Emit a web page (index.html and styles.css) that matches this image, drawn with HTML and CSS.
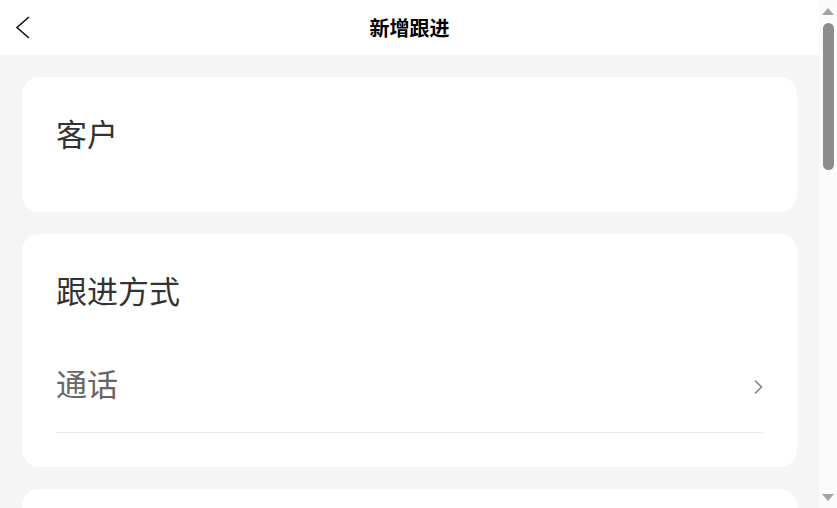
FILE: index.html
```html
<!DOCTYPE html>
<html lang="zh-CN">
<head>
<meta charset="utf-8">
<title>新增跟进</title>
<link rel="stylesheet" href="styles.css">
</head>
<body>
<div class="screen">
  <div class="app">
    <header class="nav">
      <button class="nav-back" type="button" aria-label="返回">
        <svg width="16" height="24" viewBox="0 0 16 24"><polyline points="14,1 2,11.5 14,22" fill="none" stroke="#111" stroke-width="1.6" stroke-linejoin="miter"/></svg>
      </button>
      <h1 class="nav-title">新增跟进</h1>
    </header>

    <main class="page">
      <section class="card card-loose">
        <div class="card-title">客户</div>
      </section>

      <section class="card">
        <div class="card-title">跟进方式</div>
        <div class="field">
          <span class="field-value">通话</span>
          <svg class="field-arrow" width="10" height="18" viewBox="0 0 10 18"><polyline points="2,2.5 8.5,9 2,15.5" fill="none" stroke="#858990" stroke-width="1.7"/></svg>
        </div>
      </section>

      <section class="card">
        <div class="card-title">跟进内容</div>
        <div class="textarea">请输入跟进内容</div>
      </section>
    </main>
  </div>

  <!-- page scrollbar: arrow buttons and a thumb about a third of the track -->
  <div class="scrollbar" aria-hidden="true">
    <div class="sb-btn"><span class="sb-tri sb-up"></span></div>
    <div class="sb-track"><div class="sb-thumb"></div></div>
    <div class="sb-btn"><span class="sb-tri sb-down"></span></div>
  </div>
</div>
</body>
</html>
```

FILE: styles.css
```css
html, body {
  margin: 0;
  padding: 0;
  height: 100%;
  overflow: hidden;
}

body {
  background: #f5f5f5;
  font-family: "Noto Sans CJK SC", "Noto Sans", sans-serif;
  color: #333;
}

.screen {
  display: flex;
  height: 100vh;
}

.app {
  flex: 1;
  min-width: 0;
  overflow: hidden;
  background: #f5f5f5;
}

.nav {
  height: 55px;
  background: #fff;
  display: flex;
  align-items: center;
  justify-content: center;
  position: relative;
}

.nav-back {
  position: absolute;
  left: 15px;
  top: 16px;
  padding: 0;
  border: 0;
  background: none;
  width: 16px;
  height: 24px;
  display: block;
}

.nav-back svg {
  display: block;
}

.nav-title {
  margin: 0;
  font-size: 20px;
  font-weight: 700;
  color: #000;
  line-height: 55px;
}

.page {
  padding: 22px 22px 40px;
  display: flex;
  flex-direction: column;
  gap: 22px;
}

.card {
  background: #fff;
  border-radius: 17px;
  padding: 31px 34px 34px;
}

.card-loose {
  padding-bottom: 54px;
}

.card-title {
  font-size: 31px;
  line-height: 50px;
  color: #333;
}

.field {
  display: flex;
  align-items: center;
  justify-content: space-between;
  padding: 40px 0 21px;
  border-bottom: 1px solid #ebebeb;
}

.field-value {
  font-size: 31px;
  line-height: 56px;
  color: #666;
}

.field-arrow {
  display: block;
  margin-top: 8px;
}

.textarea {
  margin-top: 30px;
  height: 260px;
  border-radius: 12px;
  background: #f7f7f7;
  padding: 20px 24px;
  font-size: 28px;
  color: #aaa;
}

/* scrollbar rail */
.scrollbar {
  width: 18px;
  flex: none;
  background: #fbfbfb;
  display: flex;
  flex-direction: column;
}

.sb-btn {
  height: 22px;
  flex: none;
  display: flex;
  align-items: center;
  justify-content: center;
}

.sb-tri {
  width: 0;
  height: 0;
  border-left: 6px solid transparent;
  border-right: 6px solid transparent;
}

.sb-up {
  border-bottom: 7px solid #a3a3a3;
}

.sb-down {
  border-top: 7px solid #a3a3a3;
}

.sb-track {
  flex: 1;
  padding-top: 1px;
  display: flex;
  justify-content: center;
}

.sb-thumb {
  width: 11px;
  height: 147px;
  margin-left: 1px;
  border-radius: 6px;
  background: #8c8c8c;
}
```
